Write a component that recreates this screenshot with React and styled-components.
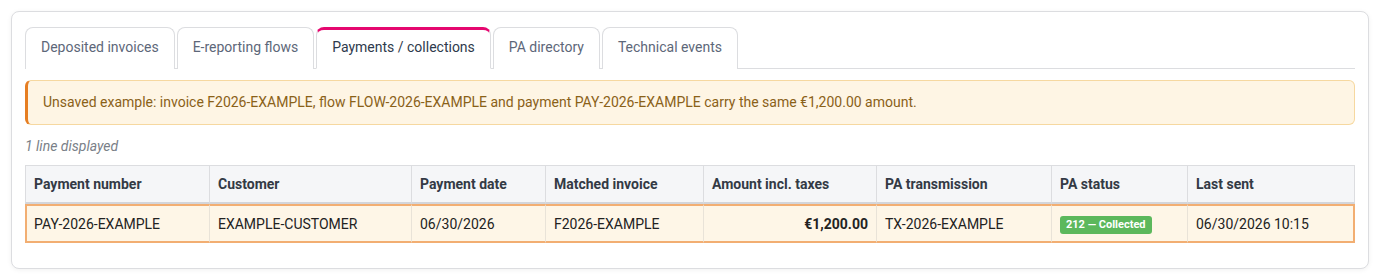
import React from "react";
import styled, { createGlobalStyle } from "styled-components";

const Global = createGlobalStyle`
  html, body { margin: 0; padding: 0; background: #ffffff; }
  body { padding: 11px; font-family: Roboto, "Liberation Sans", Arial, sans-serif; font-size: 14px; color: #222; }
  * { box-sizing: border-box; }
`;

const Card = styled.div`
  border: 1px solid #dcdde0;
  border-radius: 8px;
  background: #fff;
  box-shadow: 0 1px 5px rgba(0, 0, 0, 0.06);
  padding: 15px 13px 25px;
`;

const TabBar = styled.div`
  display: flex;
  gap: 2px;
  border-bottom: 1px solid #dcdde0;
  height: 42px;
`;

const Tab = styled.div`
  border: 1px solid #dcdde0;
  border-top: ${(p) => (p.$active ? "3px solid #e5076f" : "1px solid #dcdde0")};
  border-bottom: ${(p) => (p.$active ? "1px solid #fff" : "none")};
  border-radius: 8px 8px 0 0;
  padding: ${(p) => (p.$active ? "7px 15px 13px" : "9px 15px 13px")};
  line-height: 20px;
  font-size: 14px;
  color: ${(p) => (p.$active ? "#2e3a4c" : "#5d6779")};
  background: #fff;
  white-space: nowrap;
  height: 42px;
`;

const Alert = styled.div`
  margin-top: 11px;
  background: #fef5e4;
  border: 1px solid #f6d8a0;
  border-left: 3px solid #e67e22;
  border-radius: 6px;
  padding: 11px 15px 12px;
  line-height: 20px;
  color: #8a6118;
  font-size: 14px;
`;

const Count = styled.div`
  margin-top: 11px;
  font-style: italic;
  font-size: 14px;
  color: #7a7f88;
  line-height: 20px;
`;

const Table = styled.table`
  margin-top: 9px;
  width: 100%;
  table-layout: fixed;
  border-collapse: separate;
  border-spacing: 0;
  font-size: 14px;
`;

const Th = styled.th`
  text-align: left;
  font-weight: 700;
  color: #333a45;
  background: #f5f6f8;
  padding: 8px 8px;
  line-height: 20px;
  border-top: 1px solid #dcdde0;
  border-left: 1px solid #dcdde0;
  border-bottom: 2px solid #d3d5da;
  &:last-child { border-right: 1px solid #dcdde0; }
`;

const Td = styled.td`
  background: #fef6e7;
  padding: 8px 8px 7px;
  line-height: 20px;
  color: #222;
  text-align: ${(p) => (p.$right ? "right" : "left")};
  font-weight: ${(p) => (p.$bold ? 700 : 400)};
  border-top: 2px solid #f2ae72;
  border-bottom: 2px solid #f2ae72;
  border-left: 1px solid #e9e3d8;
  &:first-child { border-left: 2px solid #f2ae72; padding-left: 7px; }
  &:last-child { border-right: 2px solid #f2ae72; }
  white-space: nowrap;
`;

const Badge = styled.span`
  display: inline-block;
  background: #5cb85c;
  color: #fff;
  font-weight: 700;
  font-size: 11px;
  line-height: 18px;
  padding: 0 6px;
  border-radius: 3px;
  vertical-align: middle;
`;

const tabs = ["Deposited invoices", "E-reporting flows", "Payments / collections", "PA directory", "Technical events"];
const cols = [
  ["Payment number", 184],
  ["Customer", 202],
  ["Payment date", 134],
  ["Matched invoice", 158],
  ["Amount incl. taxes", 173],
  ["PA transmission", 175],
  ["PA status", 136],
  ["Last sent", 168],
];

export default function App() {
  return (
    <>
      <Global />
      <Card>
        <TabBar>
          {tabs.map((t, i) => (
            <Tab key={t} $active={i === 2}>{t}</Tab>
          ))}
        </TabBar>
        <Alert>
          Unsaved example: invoice F2026-EXAMPLE, flow FLOW-2026-EXAMPLE and payment PAY-2026-EXAMPLE carry the same €1,200.00 amount.
        </Alert>
        <Count>1 line displayed</Count>
        <Table>
          <colgroup>
            {cols.map(([n, w]) => (
              <col key={n} style={{ width: w }} />
            ))}
          </colgroup>
          <thead>
            <tr>
              {cols.map(([n]) => (
                <Th key={n}>{n}</Th>
              ))}
            </tr>
          </thead>
          <tbody>
            <tr>
              <Td>PAY-2026-EXAMPLE</Td>
              <Td>EXAMPLE-CUSTOMER</Td>
              <Td>06/30/2026</Td>
              <Td>F2026-EXAMPLE</Td>
              <Td $right $bold>€1,200.00</Td>
              <Td>TX-2026-EXAMPLE</Td>
              <Td><Badge>212 — Collected</Badge></Td>
              <Td>06/30/2026 10:15</Td>
            </tr>
          </tbody>
        </Table>
      </Card>
    </>
  );
}
